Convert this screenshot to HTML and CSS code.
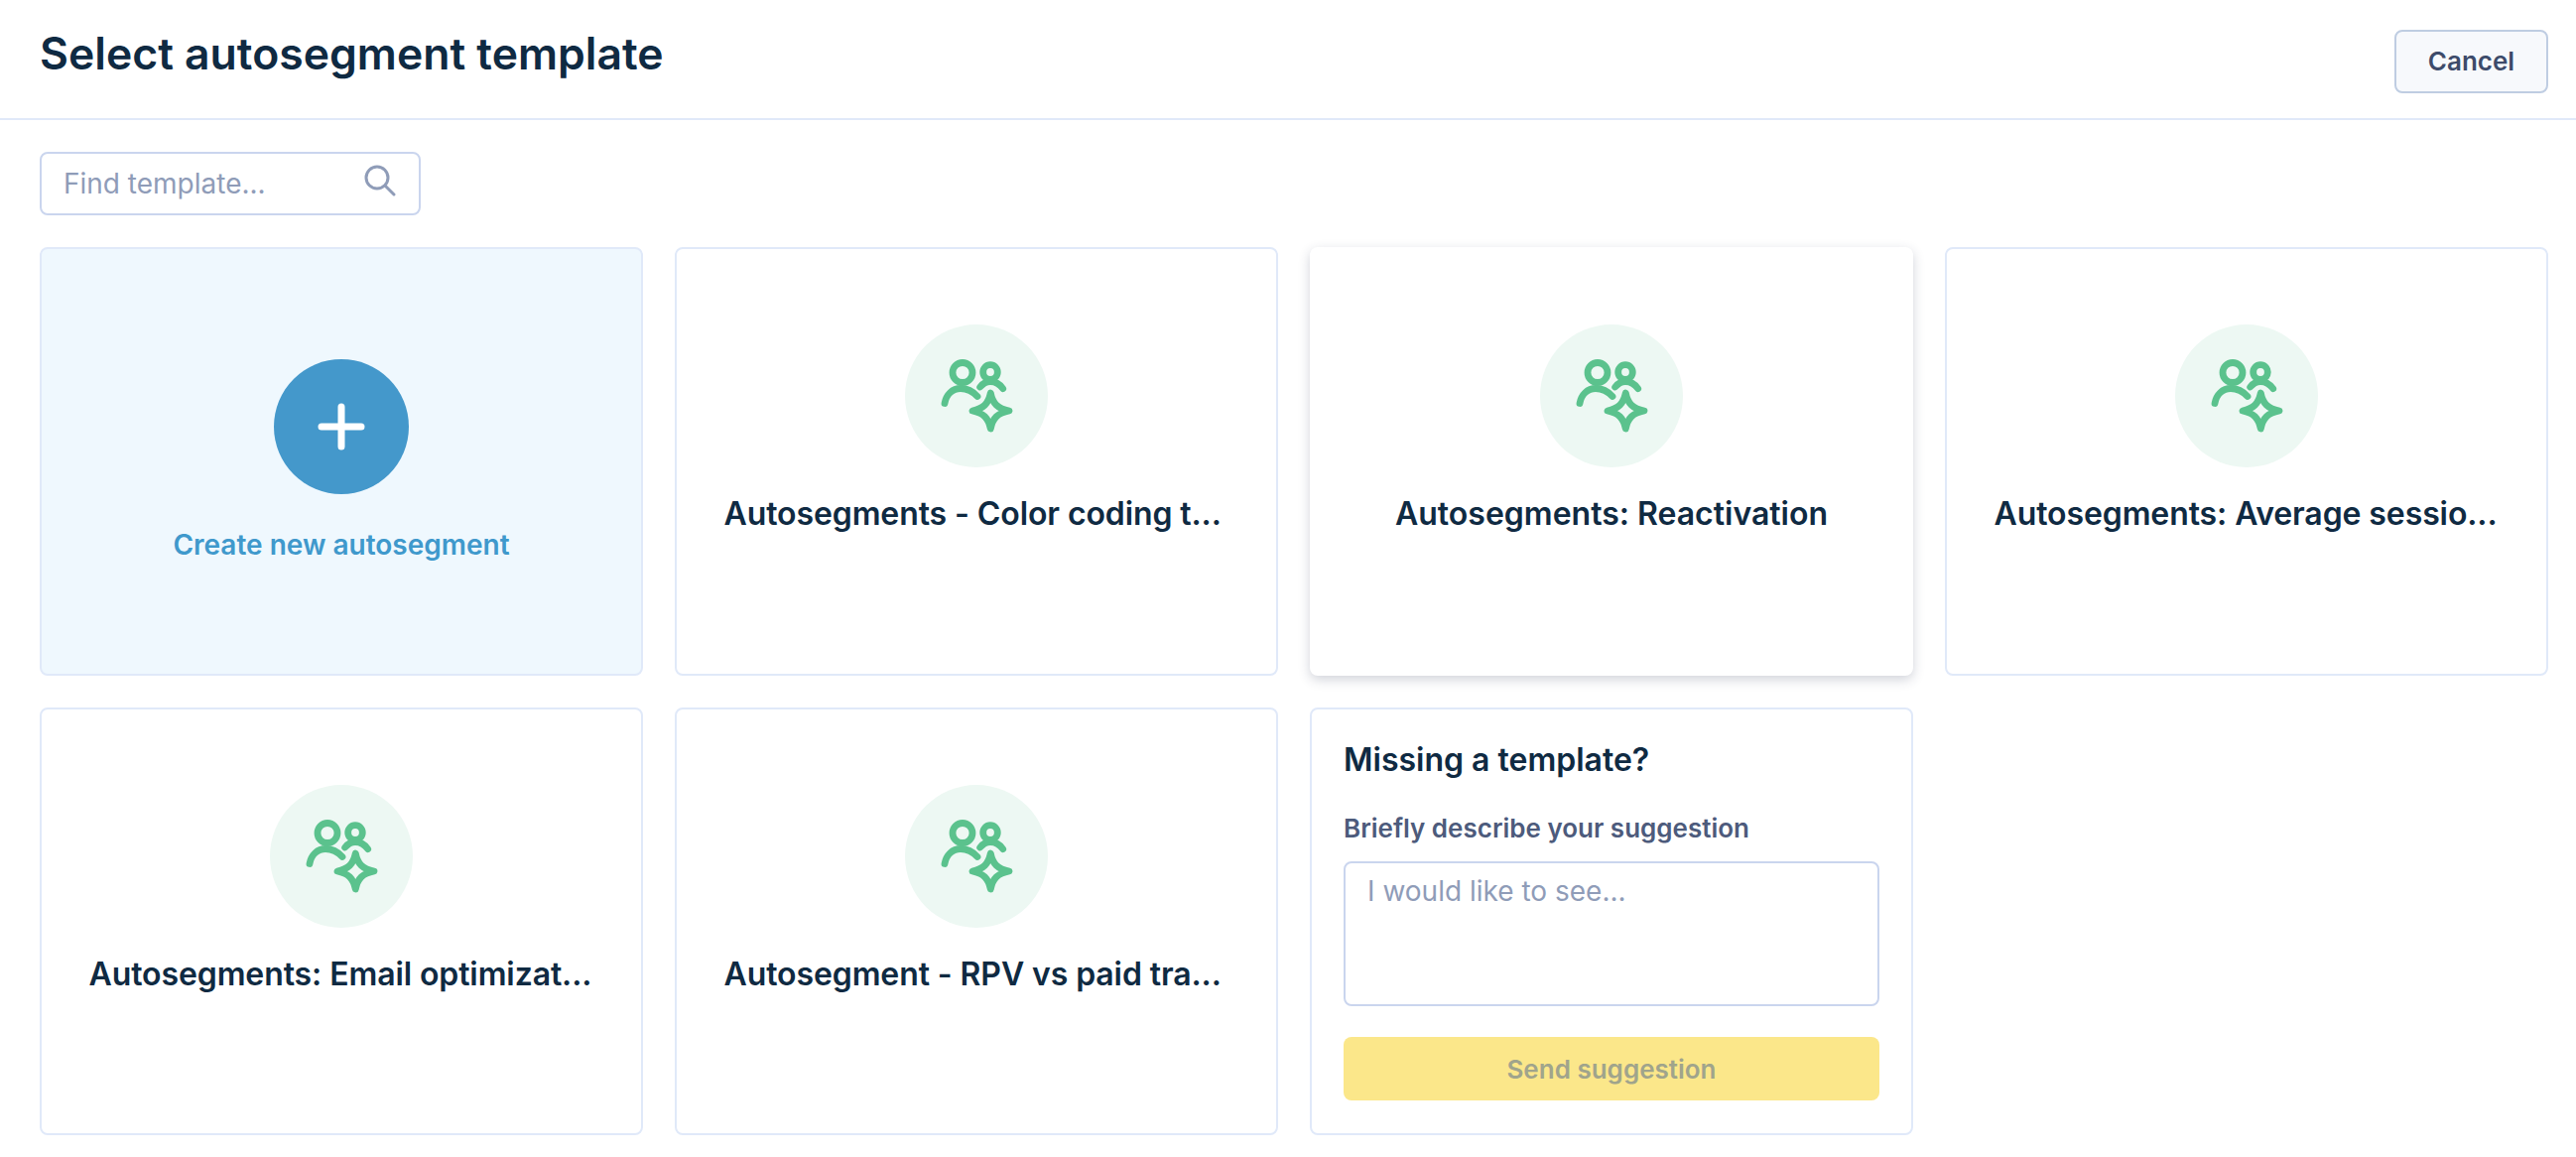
FILE: index.html
```html
<!DOCTYPE html>
<html lang="en">
<head>
<meta charset="utf-8">
<title>Select autosegment template</title>
<link rel="stylesheet" href="styles.css">
</head>
<body>
<svg class="defs" width="0" height="0" aria-hidden="true">
  <symbol id="seg" viewBox="32 17 144 144">
    <g fill="none" stroke="#5bc28d" stroke-width="6.800" stroke-linecap="round" stroke-linejoin="round">
      <circle cx="90" cy="65.500" r="10"/>
      <path d="M72 96.500C73.500 87.500 80 81.500 88 81.500C94.500 81.500 100.500 84.500 105 89.500"/>
      <circle cx="118" cy="65" r="7.300"/>
      <path d="M107.700 80C110.500 76.500 114 74.500 118 74.500C123 74.500 127.500 77 130.700 81.700"/>
      <path d="M118.300 86C120.500 97 125.500 101.700 137 104C125.500 106.300 120.500 111 118.300 122C116 111 111 106.300 100 104C111 101.700 116 97 118.300 86Z"/>
    </g>
  </symbol>
</svg>
<header class="topbar">
  <h1 class="page-title">Select autosegment template</h1>
  <button class="cancel-btn" type="button">Cancel</button>
</header>
<main class="content">
  <div class="search">
    <input class="search-input" type="text" placeholder="Find template...">
    <svg class="search-icon" viewBox="0 0 32 32" width="32" height="32" fill="none" stroke="#8f9cb8" stroke-width="3" stroke-linecap="round">
      <circle cx="13" cy="13" r="11"/>
      <path d="M21 21l9 9"/>
    </svg>
  </div>
  <section class="grid">
    <article class="card card-new">
      <div class="plus-circle">
        <svg viewBox="0 0 48 48" width="48" height="48" stroke="#fff" stroke-width="7" stroke-linecap="round"><path d="M24 4v40M4 24h40"/></svg>
      </div>
      <div class="new-label">Create new autosegment</div>
    </article>
    <article class="card">
      <div class="icon-circle"><svg class="seg-icon"><use href="#seg"/></svg></div>
      <div class="card-title card-title-cut">Autosegments - Color coding t...</div>
    </article>
    <article class="card card-hover">
      <div class="icon-circle"><svg class="seg-icon"><use href="#seg"/></svg></div>
      <div class="card-title">Autosegments: Reactivation</div>
    </article>
    <article class="card">
      <div class="icon-circle"><svg class="seg-icon"><use href="#seg"/></svg></div>
      <div class="card-title card-title-cut">Autosegments: Average sessio...</div>
    </article>
    <article class="card">
      <div class="icon-circle"><svg class="seg-icon"><use href="#seg"/></svg></div>
      <div class="card-title card-title-cut">Autosegments: Email optimizat...</div>
    </article>
    <article class="card">
      <div class="icon-circle"><svg class="seg-icon"><use href="#seg"/></svg></div>
      <div class="card-title card-title-cut">Autosegment - RPV vs paid tra...</div>
    </article>
    <article class="card card-form">
      <h2 class="form-title">Missing a template?</h2>
      <label class="form-label" for="sug">Briefly describe your suggestion</label>
      <textarea class="form-area" id="sug" placeholder="I would like to see..."></textarea>
      <button class="send-btn" type="button">Send suggestion</button>
    </article>
  </section>
</main>
</body>
</html>
```
FILE: styles.css
```css
* { box-sizing: border-box; }
html, body { margin: 0; background: #fff; }
body { font-family: Inter, "Liberation Sans", sans-serif; color: #0f2a42; height: 1166px; overflow: hidden; }
.defs { position: absolute; }
.topbar {
  height: 121px;
  padding: 29px 28px 0 40px;
  display: flex;
  justify-content: space-between;
  align-items: flex-start;
  border-bottom: 2px solid #e0e9f9;
}
.page-title { margin: 0; font-size: 44.5px; line-height: 50px; font-weight: 600; color: #0f2a42; }
.cancel-btn {
  width: 155px; height: 64px;
  margin-top: 1px;
  background: #f7f9fc;
  border: 2px solid #bfcde2;
  border-radius: 8px;
  font: 600 26px Inter, sans-serif;
  color: #3d4b6a;
  padding: 0 0 2px;
}
.content { padding: 32px 28px 0 40px; }
.search { position: relative; width: 384px; height: 64px; }
.search-input {
  width: 100%; height: 100%;
  border: 2px solid #cad5ee;
  border-radius: 8px;
  padding: 0 80px 0 22px;
  font: 400 28px Inter, sans-serif;
  color: #0f2a42;
  outline: none;
}
.search-input::placeholder, .form-area::placeholder { color: #8f9cb8; opacity: 1; }
.search-icon { position: absolute; right: 25px; top: 13px; }
.grid {
  margin-top: 32px;
  display: grid;
  grid-template-columns: repeat(4, 608px);
  grid-auto-rows: 431.5px;
  gap: 32px;
}
.card {
  border: 2px solid #e0e9f9;
  border-radius: 8px;
  background: #fff;
  display: flex;
  flex-direction: column;
  align-items: center;
  padding-top: 76px;
}
.card-hover { border-color: #fff; box-shadow: 0 4px 12px rgba(45, 55, 85, .22); }
.card-new { background: #eff8fe; padding-top: 111px; }
.plus-circle {
  width: 136px; height: 136px; border-radius: 50%;
  background: #4498cb;
  display: flex; align-items: center; justify-content: center;
}
.new-label { margin-top: 33px; font-size: 28px; line-height: 36px; font-weight: 600; color: #3f99cc; }
.icon-circle {
  width: 144px; height: 144px; border-radius: 50%;
  background: #edf8f3;
}
.seg-icon { display: block; width: 144px; height: 144px; }
.card-title {
  margin-top: 26px;
  font-size: 32px; line-height: 42px; font-weight: 600;
  color: #0f2a42;
  white-space: nowrap;
}
.card-title-cut { width: 509px; letter-spacing: -0.1px; }
.card-form { align-items: stretch; padding: 31.5px 32px 0; }
.form-title { margin: 0; font-size: 32px; line-height: 40px; font-weight: 600; color: #0f2a42; }
.form-label { margin-top: 31.5px; font-size: 26px; line-height: 34px; font-weight: 600; color: #4d5b7c; }
.form-area {
  display: block; margin-top: 16px; width: 100%; height: 146px;
  border: 2px solid #cad5ee; border-radius: 8px;
  padding: 10px 22px;
  font: 400 28px/36px Inter, sans-serif;
  resize: none; outline: none;
}
.send-btn {
  margin-top: 31.5px; height: 64px; width: 100%;
  background: #fbe78a; border: 0; border-radius: 8px;
  font: 600 26px Inter, sans-serif; padding: 0;
  color: #a0a48c;
}
```
